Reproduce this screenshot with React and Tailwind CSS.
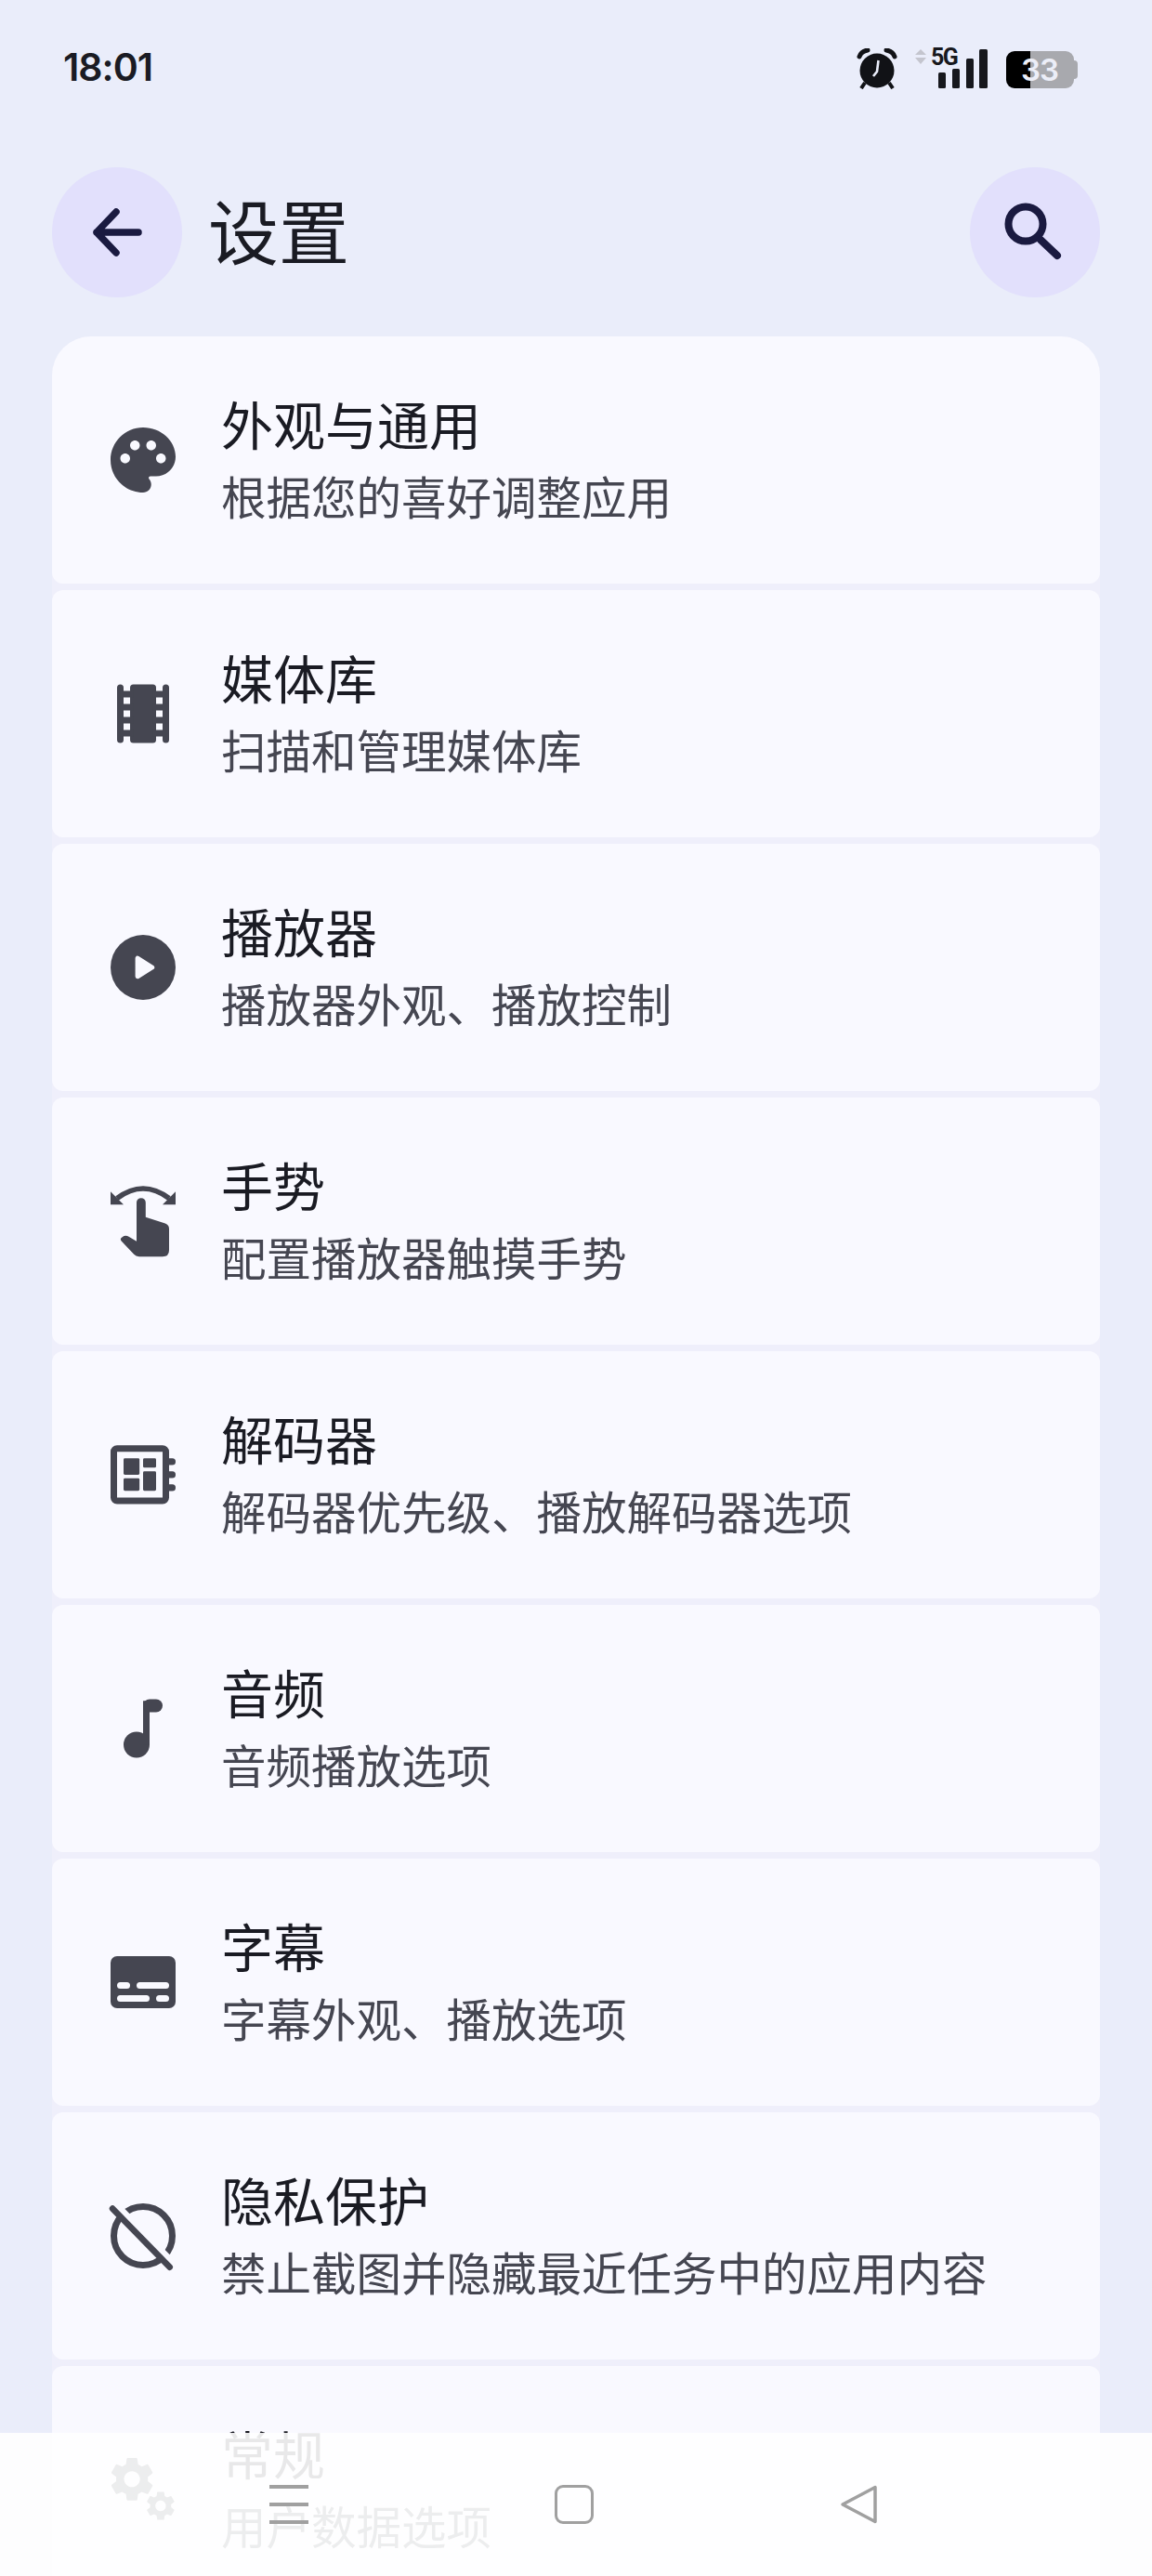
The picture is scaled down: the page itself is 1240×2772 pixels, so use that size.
const GEAR =
  "M19.14 12.94c.04-.3.06-.61.06-.94 0-.32-.02-.64-.07-.94l2.03-1.58c.18-.14.23-.41.12-.61l-1.92-3.32c-.12-.22-.37-.29-.59-.22l-2.39.96c-.5-.38-1.03-.7-1.62-.94l-.36-2.54c-.04-.24-.24-.41-.48-.41h-3.84c-.24 0-.43.17-.47.41l-.36 2.54c-.59.24-1.13.57-1.62.94l-2.39-.96c-.22-.08-.47 0-.59.22L2.74 8.87c-.12.21-.08.47.12.61l2.03 1.58c-.05.3-.09.63-.09.94s.02.64.07.94l-2.03 1.58c-.18.14-.23.41-.12.61l1.92 3.32c.12.22.37.29.59.22l2.39-.96c.5.38 1.03.7 1.62.94l.36 2.54c.05.24.24.41.48.41h3.84c.24 0 .44-.17.47-.41l.36-2.54c.59-.24 1.13-.56 1.62-.94l2.39.96c.22.08.47 0 .59-.22l1.92-3.32c.12-.22.07-.47-.12-.61l-2.01-1.58zM12 15.6c-1.98 0-3.6-1.62-3.6-3.6s1.62-3.6 3.6-3.6 3.6 1.62 3.6 3.6-1.62 3.6-3.6 3.6z";

const CARD = "#f9f9ff";

function Palette() {
  return (
    <path
      fillRule="evenodd"
      d="M12 2C6.49 2 2 6.49 2 12s4.49 10 10 10c1.38 0 2.5-1.12 2.5-2.5 0-.61-.23-1.2-.64-1.67-.08-.1-.13-.21-.13-.33 0-.28.22-.5.5-.5H16c3.31 0 6-2.69 6-6 0-4.96-4.49-9-10-9zm5.5 11c-.83 0-1.5-.67-1.5-1.5s.67-1.5 1.5-1.5 1.5.67 1.5 1.5-.67 1.5-1.5 1.5zm-3-4c-.83 0-1.5-.67-1.5-1.5S13.67 6 14.5 6s1.5.67 1.5 1.5S15.33 9 14.5 9zM5 11.5c0-.83.67-1.5 1.5-1.5s1.5.67 1.5 1.5S7.33 13 6.5 13 5 12.33 5 11.5zm6-4c0 .83-.67 1.5-1.5 1.5S8 8.33 8 7.5 8.67 6 9.5 6s1.5.67 1.5 1.5z"
    />
  );
}

function Film() {
  return (
    <>
      <rect x="4" y="3" width="2" height="18" rx="1" />
      <rect x="18" y="3" width="2" height="18" rx="1" />
      <rect x="8" y="3" width="8" height="18" rx="1" />
      <rect x="5" y="5" width="4" height="2" />
      <rect x="5" y="9" width="4" height="2" />
      <rect x="5" y="13" width="4" height="2" />
      <rect x="5" y="17" width="4" height="2" />
      <rect x="15" y="5" width="4" height="2" />
      <rect x="15" y="9" width="4" height="2" />
      <rect x="15" y="13" width="4" height="2" />
      <rect x="15" y="17" width="4" height="2" />
    </>
  );
}

function Play() {
  return (
    <>
      <circle cx="12" cy="12" r="10" />
      <polygon points="10.3,9.2 10.3,14.8 14.8,12" fill={CARD} stroke={CARD} strokeWidth="1.4" strokeLinejoin="round" />
    </>
  );
}

function Gesture() {
  return (
    <>
      <path d="M4 5 Q12 -1 20 5" fill="none" stroke="currentColor" strokeWidth="1.6" />
      <polygon points="2,2.9 2,6.9 6,6.9" />
      <polygon points="22,2.9 22,6.9 18,6.9" />
      <path d="M10 6.3a1.4 1.4 0 0 1 2.8 0V10.8L18.8 12.7Q20 13.1 20 14.4V20.9Q20 22.9 18 22.9H10.8Q9.8 22.9 9.2 22.2L5.4 18.2Q4.7 17.4 5.6 16.9Q6.6 16.2 7.6 16.8L10 18.2Z" />
    </>
  );
}

function Decoder() {
  return (
    <>
      <rect x="3" y="3.9" width="16" height="16.1" rx="1" fill="none" stroke="currentColor" strokeWidth="2" />
      <rect x="6" y="6.9" width="4.9" height="5.1" rx=".4" />
      <rect x="6" y="13.1" width="4.9" height="3.8" rx=".4" />
      <rect x="12" y="6.9" width="4" height="2.9" rx=".4" />
      <rect x="12" y="10.9" width="4" height="6" rx=".4" />
      <rect x="19" y="6.9" width="3" height="2.1" rx="1" />
      <rect x="19" y="10.9" width="3" height="2.1" rx="1" />
      <rect x="19" y="14.9" width="3" height="2.1" rx="1" />
    </>
  );
}

function Note() {
  return (
    <>
      <circle cx="10" cy="17" r="4" />
      <rect x="12" y="3.5" width="2" height="13.5" />
      <rect x="12" y="3" width="6" height="4" rx="2" />
    </>
  );
}

function Subtitle() {
  return (
    <>
      <rect x="2" y="4" width="20" height="16" rx="2" />
      <g fill={CARD}>
        <rect x="4" y="12" width="4" height="2" rx="1" />
        <rect x="10" y="12" width="10" height="2" rx="1" />
        <rect x="4" y="16" width="10" height="2" rx="1" />
        <rect x="16" y="16" width="4" height="2" rx="1" />
      </g>
    </>
  );
}

function Privacy() {
  return (
    <>
      <circle cx="12" cy="12" r="9" fill="none" stroke="currentColor" strokeWidth="2" />
      <line x1="3.6" y1="2.4" x2="21.6" y2="20.8" stroke={CARD} strokeWidth="2.2" />
      <line x1="2.6" y1="3.6" x2="20.2" y2="21.6" stroke="currentColor" strokeWidth="1.9" strokeLinecap="round" />
    </>
  );
}

function Gears() {
  return (
    <>
      <path fillRule="evenodd" d={GEAR} transform="translate(8.6 8.8) scale(.68) translate(-12 -12)" />
      <path fillRule="evenodd" d={GEAR} transform="translate(17.4 17) scale(.45) translate(-12 -12)" />
    </>
  );
}

const items = [
  { title: "外观与通用", sub: "根据您的喜好调整应用", Icon: Palette },
  { title: "媒体库", sub: "扫描和管理媒体库", Icon: Film },
  { title: "播放器", sub: "播放器外观、播放控制", Icon: Play },
  { title: "手势", sub: "配置播放器触摸手势", Icon: Gesture },
  { title: "解码器", sub: "解码器优先级、播放解码器选项", Icon: Decoder },
  { title: "音频", sub: "音频播放选项", Icon: Note },
  { title: "字幕", sub: "字幕外观、播放选项", Icon: Subtitle },
  { title: "隐私保护", sub: "禁止截图并隐藏最近任务中的应用内容", Icon: Privacy },
  { title: "常规", sub: "用户数据选项", Icon: Gears },
];

function StatusBar() {
  return (
    <div className="flex h-[180px] justify-between pl-[68px] pr-[80px] pt-[52px]">
      <span className="font-['Inter',sans-serif] text-[41px] font-semibold leading-[40px] tracking-[-1px] text-[#1a1b23]">
        18:01
      </span>
      <div className="flex items-start">
        {/* alarm */}
        <svg width="44" height="44" viewBox="0 0 44 44" className="text-[#111216]">
          <circle cx="22" cy="24" r="18.5" fill="currentColor" />
          <path d="M3 9Q5 3 12 2" fill="none" stroke="currentColor" strokeWidth="5" strokeLinecap="round" />
          <path d="M41 9Q39 3 32 2" fill="none" stroke="currentColor" strokeWidth="5" strokeLinecap="round" />
          <path d="M9 37L5 43M35 37L39 43" stroke="currentColor" strokeWidth="4" />
          <path d="M23.5 13L22 25L18 30" fill="none" stroke="#eaedfa" strokeWidth="2.6" />
        </svg>
        {/* signal */}
        <div className="relative ml-[19px] h-[44px] w-[78px]">
          <svg width="78" height="44" viewBox="0 0 78 44" className="text-[#17181d]">
            <polygon points="0,7 12,7 6,1" fill="#c4c5ce" />
            <polygon points="0,10 12,10 6,17" fill="#c4c5ce" />
            <rect x="25" y="26" width="8" height="17" rx="1.5" fill="currentColor" />
            <rect x="40" y="22" width="8" height="21" rx="1.5" fill="currentColor" />
            <rect x="55" y="11" width="8" height="32" rx="1.5" fill="currentColor" />
            <rect x="69" y="1" width="9" height="42" rx="1.5" fill="currentColor" />
          </svg>
          <span className="absolute left-[17px] top-[-2px] font-['Roboto',sans-serif] text-[25px] font-bold leading-[24px] tracking-[-1.5px] text-[#17181d]">
            5G
          </span>
        </div>
        {/* battery */}
        <div className="relative ml-[20px] mt-[3px] flex h-[40px] w-[77px]">
          <div className="h-full w-[26px] rounded-l-[9px] bg-black" />
          <div className="h-full w-[47px] rounded-r-[9px] bg-[#a8a9ae]" />
          <div className="my-auto h-[20px] w-[4px] rounded-r-[4px] bg-[#a8a9ae]" />
          <span className="absolute left-[16px] top-0 font-['Inter',sans-serif] text-[33px] font-semibold leading-[40px] tracking-[-1px] text-[#eceef8]">
            33
          </span>
        </div>
      </div>
    </div>
  );
}

function Row({ item, index }) {
  const { Icon } = item;
  const radius = index === 0 ? "rounded-t-[42px] rounded-b-[12px]" : "rounded-[12px]";
  return (
    <div className={`flex h-[266px] shrink-0 items-center gap-[42px] bg-[#f9f9ff] pl-[56px] ${radius}`}>
      <svg width="84" height="84" viewBox="0 0 24 24" fill="currentColor" className="shrink-0 text-[#454651]">
        <Icon />
      </svg>
      <div className="flex flex-col pb-[8px]">
        <span className="text-[56px] leading-[84px] text-[#1a1b23]">{item.title}</span>
        <span className="text-[48.5px] leading-[72px] text-[#454651]">{item.sub}</span>
      </div>
    </div>
  );
}

export default function App() {
  return (
    <div className="relative h-[2772px] w-[1240px] overflow-hidden bg-[#eaedfa] font-['Noto_Sans_CJK_SC',sans-serif]">
      <StatusBar />

      {/* header */}
      <div className="flex h-[140px] items-center justify-between px-[56px]">
        <div className="flex items-center gap-[28px]">
          <button className="flex h-[140px] w-[140px] items-center justify-center rounded-full bg-[#e2e0fc]">
            <svg width="84" height="84" viewBox="0 0 84 84" fill="none" stroke="#1a1a40" strokeWidth="7.5" strokeLinecap="round" strokeLinejoin="round">
              <path d="M65 42H20M41 20L20 42L41 64" />
            </svg>
          </button>
          <h1 className="pb-[8px] text-[76px] font-normal leading-[100px] text-[#1a1b23]">设置</h1>
        </div>
        <button className="flex h-[140px] w-[140px] items-center justify-center rounded-full bg-[#e2e0fc]">
          <svg width="84" height="84" viewBox="0 0 84 84" fill="none" stroke="#1a1a40" strokeWidth="8" strokeLinecap="round">
            <circle cx="32" cy="33" r="18.5" />
            <path d="M48 50L66 67" />
          </svg>
        </button>
      </div>

      {/* settings list */}
      <div className="mx-[56px] mt-[42px] flex flex-col gap-[7px] rounded-t-[42px] bg-[#efeffb]">
        {items.map((item, i) => (
          <Row key={item.title} item={item} index={i} />
        ))}
      </div>

      {/* navigation bar */}
      <div className="absolute bottom-0 left-0 flex h-[154px] w-full items-center gap-[265px] bg-white/90 pl-[290px]">
        <div className="flex h-[42px] w-[42px] flex-col justify-between">
          <div className="h-[4px] bg-[#a0a0a0]" />
          <div className="h-[4px] bg-[#a0a0a0]" />
          <div className="h-[4px] bg-[#a0a0a0]" />
        </div>
        <div className="h-[42px] w-[42px] rounded-[9px] border-[3px] border-[#a0a0a0]" />
        <svg width="42" height="44" viewBox="0 0 42 44" fill="none" stroke="#a0a0a0" strokeWidth="3.5" strokeLinejoin="round">
          <path d="M38 3.5V40.5L3 22Z" />
        </svg>
      </div>
    </div>
  );
}
